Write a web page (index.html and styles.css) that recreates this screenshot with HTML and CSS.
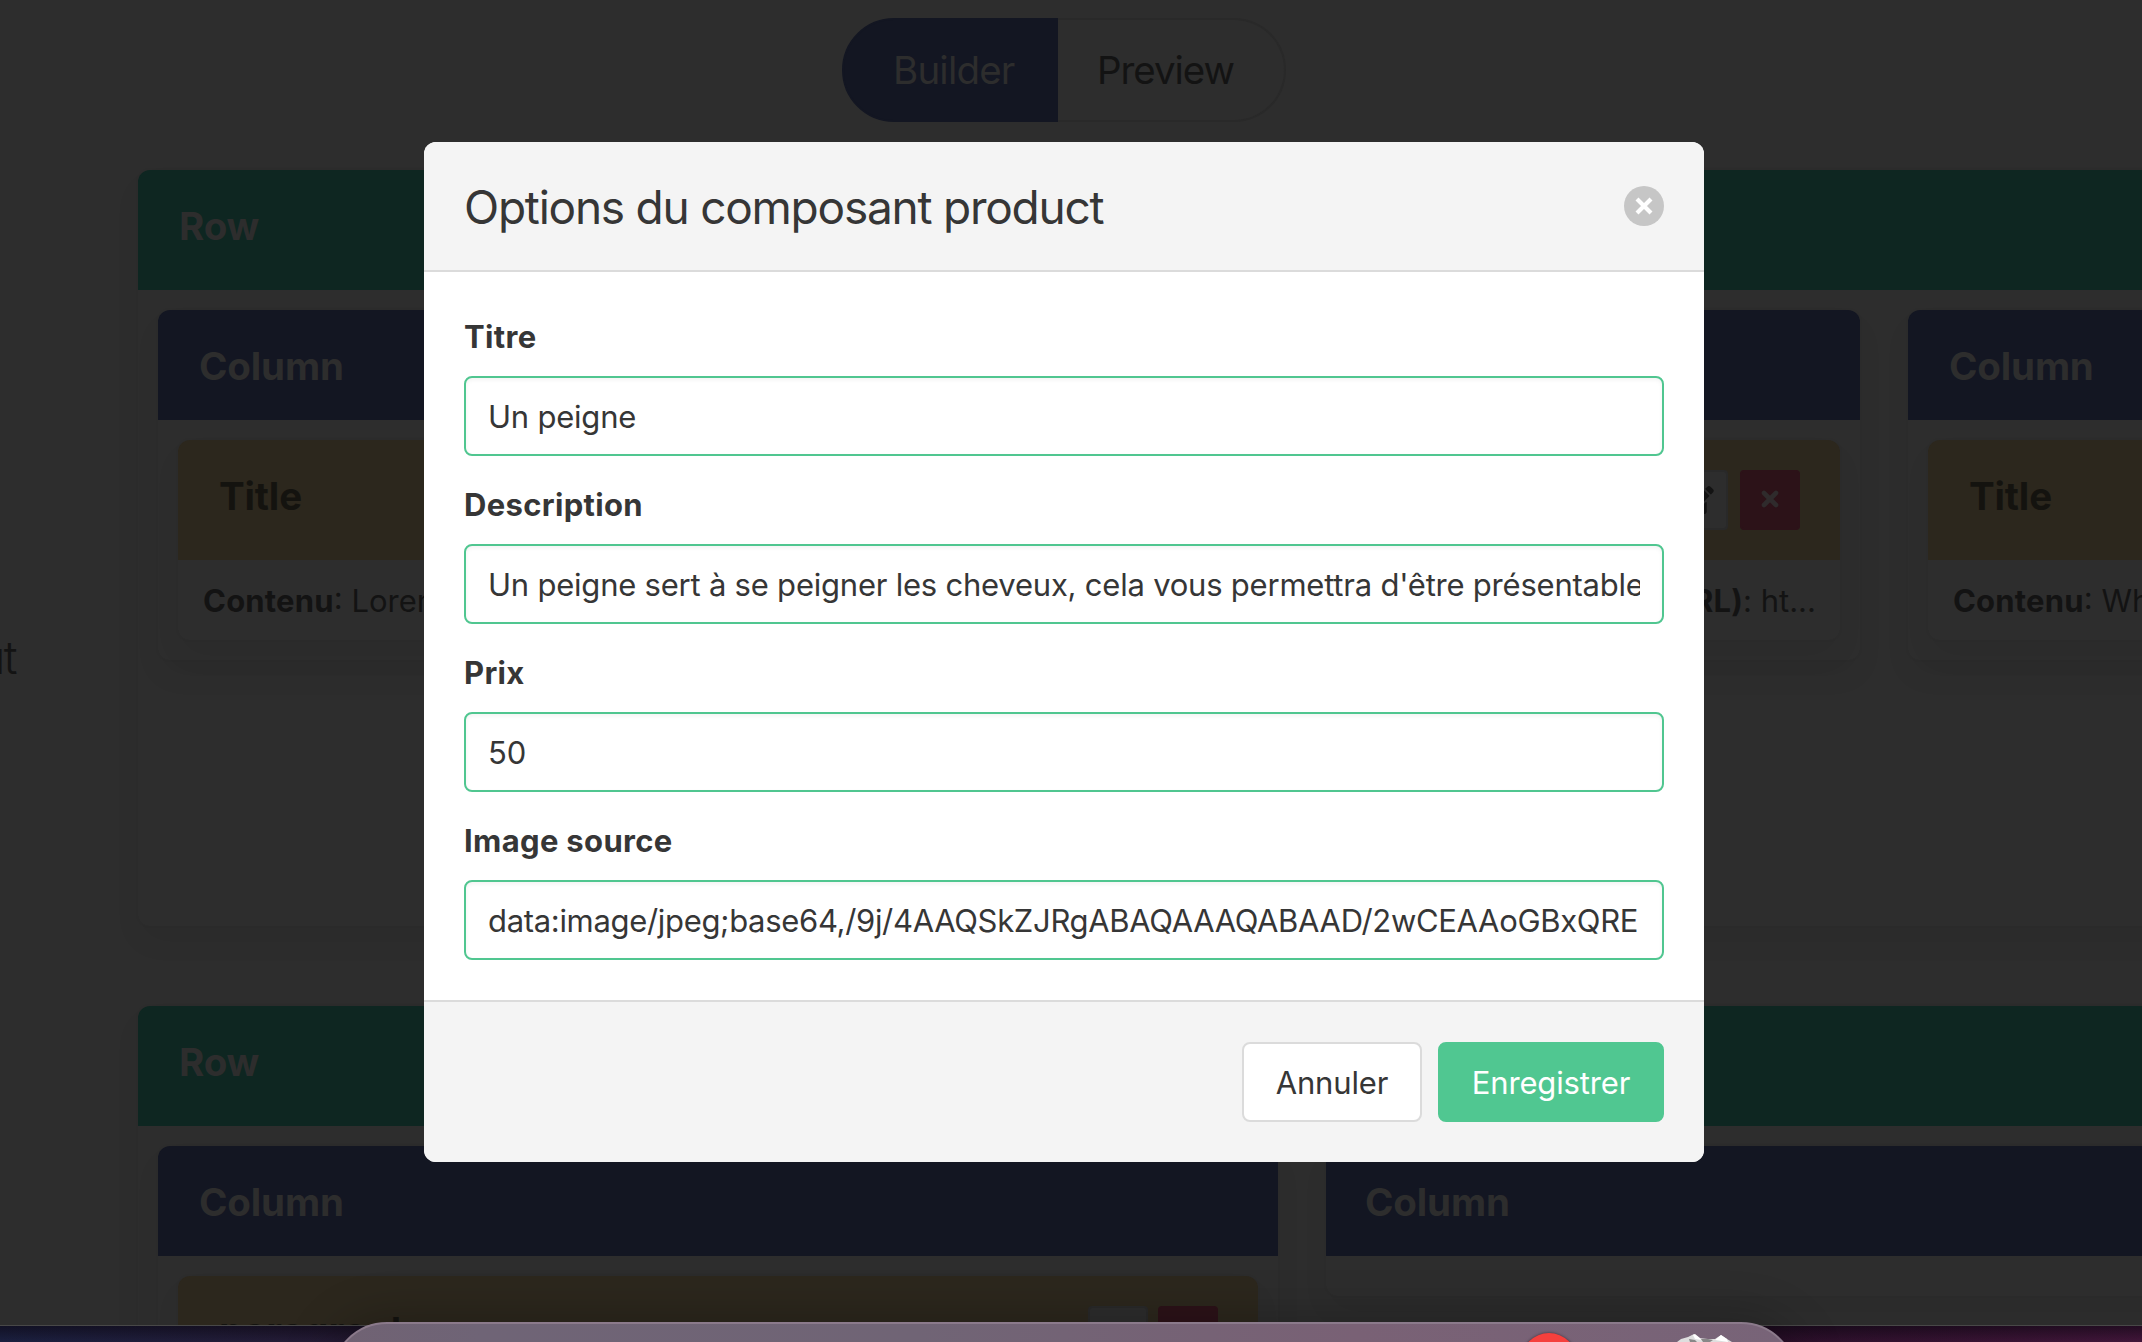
FILE: index.html
```html
<!DOCTYPE html>
<html lang="fr">
<head>
<meta charset="utf-8">
<title>Builder</title>
<link rel="stylesheet" href="styles.css">
</head>
<body>
<div class="page">
  <aside class="sidebar"><span>ut</span></aside>
  <main class="builder">
    <nav class="tabs">
      <span class="tab active"><b>Builder</b></span>
      <span class="tab"><b>Preview</b></span>
    </nav>
    <section class="card row first">
      <header class="head row-head"><span>Row</span></header>
      <div class="columns quarters">
        <div class="card column">
          <header class="head column-head"><span>Column</span></header>
          <div class="stack"><div class="card item">
            <header class="head item-head"><span>Title</span></header>
            <p class="content"><strong>Contenu</strong>: Lorem</p>
          </div></div>
        </div>
        <div class="card column"><header class="head column-head"></header></div>
        <div class="card column">
          <header class="head column-head"></header>
          <div class="stack"><div class="card item">
            <header class="head item-head"><span></span>
              <div class="tools">
                <i class="tool"><svg viewBox="0 0 576 512" width="32" height="28"><path d="M402.6 83.2l90.200 90.200c3.800 3.800 3.800 10 0 13.800L274.400 405.600l-92.800 10.300c-12.400 1.400-22.900-9.100-21.500-21.500l10.300-92.800L388.800 83.200c3.800-3.800 10-3.800 13.800 0zm162-22.900l-48.800-48.800c-15.200-15.200-39.900-15.200-55.200 0l-35.400 35.400c-3.800 3.800-3.800 10 0 13.800l90.200 90.200c3.800 3.800 10 3.800 13.800 0l35.400-35.400c15.200-15.300 15.200-40 0-55.200zM384 346.200V448H64V128h229.800c3.200 0 6.200-1.300 8.500-3.500l40-40c7.600-7.600 2.200-20.500-8.500-20.500H48C21.500 64 0 85.500 0 112v352c0 26.500 21.500 48 48 48h352c26.500 0 48-21.500 48-48V306.200c0-10.700-12.900-16-20.500-8.500l-40 40c-2.200 2.300-3.500 5.300-3.500 8.500z"/></svg></i>
                <i class="tool danger"><svg viewBox="0 0 18 18" width="18" height="18"><path d="M3 3l12 12m0-12l-12 12"/></svg></i>
              </div>
            </header>
            <p class="content end"><strong>RL)</strong>: ht...</p>
          </div></div>
        </div>
        <div class="card column">
          <header class="head column-head"><span>Column</span></header>
          <div class="stack"><div class="card item">
            <header class="head item-head"><span>Title</span></header>
            <p class="content"><strong>Contenu</strong>: Wh</p>
          </div></div>
        </div>
      </div>
    </section>
    <section class="card row">
      <header class="head row-head"><span>Row</span></header>
      <div class="columns halves">
        <div class="card column">
          <header class="head column-head"><span>Column</span></header>
          <div class="stack"><div class="card item">
            <header class="head item-head"><span class="name">paragraph</span>
              <div class="tools"><i class="tool"></i><i class="tool danger"></i></div>
            </header>
          </div></div>
        </div>
        <div class="card column">
          <header class="head column-head"><span>Column</span></header>
          <div class="empty"></div>
        </div>
      </div>
    </section>
  </main>
</div>

<div class="desktop"></div>
<div class="dock">
  <span class="badge"></span>
  <svg class="bin" viewBox="0 0 56 8" width="56" height="8"><path fill="#dedede" d="M0 8L4 5 11 3 17 0 22 4 31 5 38 5 44 1 50 5 55 8z"/><path fill="#fff" d="M16 1l2-1 5 4 1 2-6-1zM38 6l6-5 6 4 1 3z"/><path fill="#888" d="M12 5l6 1 2 2h-7zM24 5l7 0 5 1-3 2h-7z"/></svg>
</div>

<div class="modal">
  <header class="modal-head">
    <h1>Options du composant product</h1>
    <svg viewBox="0 0 40 40" width="40" height="40"><circle cx="20" cy="20" r="20" fill="#c6c6c6"/><path d="M13 13l14 14m0-14L13 27" stroke="#fff" stroke-width="4.200"/></svg>
  </header>
  <div class="modal-body">
    <div class="field"><label>Titre</label><div class="input"><span>Un peigne</span></div></div>
    <div class="field"><label>Description</label><div class="input"><span>Un peigne sert à se peigner les cheveux, cela vous permettra d'être présentable</span></div></div>
    <div class="field"><label>Prix</label><div class="input"><span>50</span></div></div>
    <div class="field"><label>Image source</label><div class="input code"><span>data:image/jpeg;base64,/9j/4AAQSkZJRgABAQAAAQABAAD/2wCEAAoGBxQRE</span></div></div>
  </div>
  <footer class="modal-foot">
    <button class="cancel">Annuler</button>
    <button class="save">Enregistrer</button>
  </footer>
</div>
</body>
</html>
```
FILE: styles.css
```css
* { box-sizing: border-box; }
html, body { height: 100%; }
body {
  margin: 0;
  overflow: hidden;
  background: #2d2d2d;
  color: #131313;
  font: 32px/1.5 Inter, "Liberation Sans", sans-serif;
}
.page { display: flex; height: 1326px; overflow: hidden; border-bottom: 1px solid #484848; }
.sidebar {
  flex: 0 0 138px;
  padding-top: 621px;
}
.sidebar span {
  display: flex;
  justify-content: flex-end;
  width: 16px;
  height: 72px;
  font-size: 46px;
  font-weight: 300;
  line-height: 72px;
  letter-spacing: -1.500px;
  white-space: nowrap;
}
.builder { flex: 0 0 2328px; }
.tabs { display: flex; height: 104px; margin: 18px 0 48px 704px; font-size: 38.500px; }
.tab {
  width: 228px;
  padding-left: 39px;
  border: 2px solid #292929;
  border-left: 0;
  border-radius: 0 52px 52px 0;
  line-height: 101px;
}
.tab b { font-weight: 400; letter-spacing: -1.050px; }
.tab.active { width: 216px; padding-left: 49px; background: #131622; border: 2px solid #131622; border-radius: 52px 0 0 52px; color: #2d2d2d; }
.tab.active b { letter-spacing: -0.800px; }
.card { border-radius: 12px; box-shadow: 0 16px 32px -4px rgba(10,10,10,.06), 0 0 0 2px rgba(10,10,10,.02); }
.row { height: 756px; margin-bottom: 80px; }
.head {
  display: flex;
  justify-content: space-between;
  padding: 26px 40px 0 41px;
  border-radius: 12px 12px 0 0;
  font-size: 38.500px;
  font-weight: 700;
  line-height: 60px;
}
.head span { letter-spacing: -0.150px; }
.row-head { height: 120px; background: #0e2621; color: #2d2d2d; }
.column-head { height: 110px; background: #131622; color: #2d2d2d; }
.item-head { height: 120px; background: #2c271d; color: #14130f; }
.columns { display: flex; gap: 48px; align-items: flex-start; padding: 20px; }
.quarters .column { flex: 0 0 535.330px; }
.halves .column { flex: 0 0 1120px; }
.halves .column + .column .column-head { padding-left: 39px; }
.stack { padding: 20px; }
.item { height: 200px; }
.content { margin: 0; padding: 18px 24px 0 25px; font-size: 31px; }
.content strong { letter-spacing: 0.200px; }
.content.end { text-align: right; }
.empty { height: 40px; }
.tools { display: flex; gap: 12px; margin-top: 4px; }
.tool { display: flex; align-items: center; justify-content: center; width: 60px; height: 60px; border: 2px solid #292929; border-radius: 4px; background: #2d2d2d; }
.tool svg { fill: #131313; }
.danger { border-color: #2c1218; background: #2c1218; }
.danger svg { margin-top: -2px; fill: none; stroke: #2f2b2c; stroke-width: 4.600; stroke-linecap: round; }
.halves .tools { gap: 10px; }
.halves .item-head { padding-top: 25px; }
.halves .tools { margin-top: 5px; }
.head .name { letter-spacing: 0.150px; }

.desktop {
  height: 16px;
  background: linear-gradient(rgba(10,5,15,.55), rgba(10,5,15,0)), linear-gradient(90deg, #1b2040, #281a32 20%, #280f28 80%, #42163a);
}
.dock {
  position: absolute;
  left: 331px;
  top: 1322px;
  width: 1466px;
  height: 20px;
  clip-path: inset(-60px -60px 0 -60px);
}
.dock::before {
  content: "";
  position: absolute;
  inset: 0 0 -100px;
  border: 2px solid #8b7a8b;
  border-radius: 56px;
  background: linear-gradient(90deg, #706273, #6f6476 10%, #706475 40%, #796175 70%, #786478);
  box-shadow: 0 0 50px rgba(0,0,0,.28);
}
.badge { position: absolute; left: 1190px; top: 11px; width: 56px; height: 56px; border-radius: 50%; background: #f5403d; box-shadow: 0 0 3px rgba(0,0,0,.5); }
.bin { position: absolute; left: 1346px; top: 12px; }

.modal {
  position: absolute;
  left: 424px;
  top: 142px;
  width: 1280px;
  height: 1020px;
  display: flex;
  flex-direction: column;
  border-radius: 12px;
  overflow: hidden;
  background: #fff;
  color: #363636;
}
.modal-head { display: flex; justify-content: space-between; align-items: center; height: 130px; padding: 0 40px; border-bottom: 2px solid #dbdbdb; background: #f4f4f4; }
h1 { margin: 2px 0 0; font-size: 46px; font-weight: 400; letter-spacing: -1.240px; white-space: nowrap; }
.modal-body { flex: 1; display: flex; flex-direction: column; gap: 24px; padding: 40px; }
label { display: block; height: 48px; margin-bottom: 16px; font-size: 31px; font-weight: 700; line-height: 49px; letter-spacing: 0.330px; }
.input { height: 80px; padding: 0 22px; border: 2px solid #50c690; border-radius: 8px; font-size: 31px; line-height: 77px; letter-spacing: -0.220px; box-shadow: inset 0 2px 4px rgba(10,10,10,.05); }
.input.code { letter-spacing: -0.320px; }
.input span { display: block; overflow: hidden; white-space: nowrap; }
.modal-foot { display: flex; justify-content: flex-end; align-items: center; gap: 16px; height: 162px; padding: 0 40px; border-top: 2px solid #dbdbdb; background: #f4f4f4; }
button { height: 80px; padding: 1px 0 0; border: 2px solid #dbdbdb; border-radius: 8px; background: #fff; color: #363636; font: 31px/76px Inter, sans-serif; letter-spacing: -0.150px; }
.cancel { width: 180px; }
.save { width: 226px; border-color: #50c791; background: #50c791; color: #fff; }
```
